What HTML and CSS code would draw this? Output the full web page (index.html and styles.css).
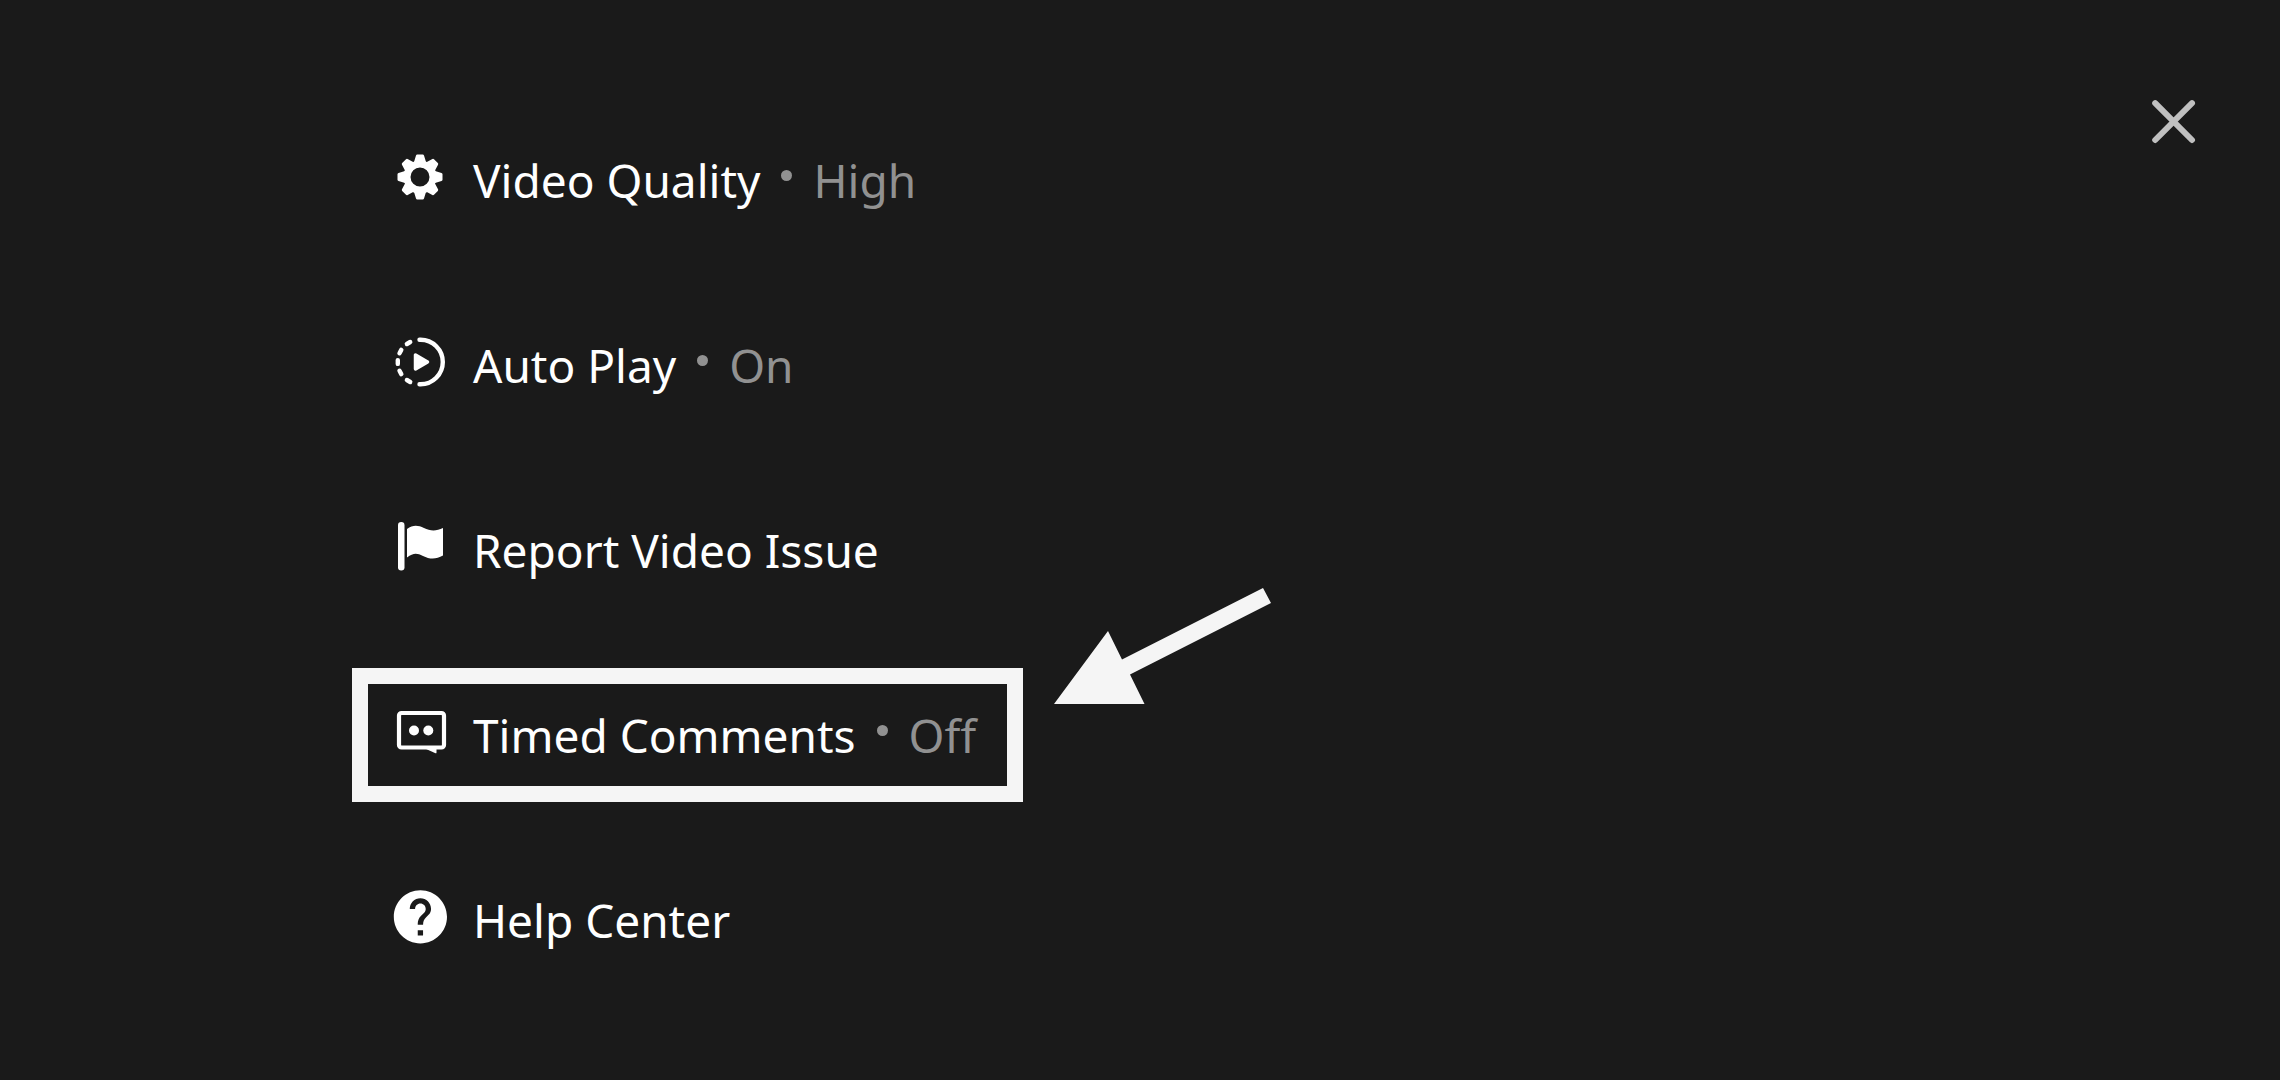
FILE: index.html
```html
<!DOCTYPE html>
<html lang="en">
<head>
    <meta charset="UTF-8">
    <meta name="viewport" content="width=device-width, initial-scale=1.0">
    <title>Player Settings</title>
    <link rel="stylesheet" href="styles.css">
</head>
<body>
    <main class="settings">
        <ul class="menu">
            <li class="menu-item">
                <button class="menu-button" type="button">
                    <svg class="icon" viewBox="0 0 54 54" aria-hidden="true">
                        <circle cx="27" cy="27" r="13" fill="none" stroke="currentColor" stroke-width="7"/>
                        <g fill="currentColor">
                            <path id="tooth" d="M21 12 23 5.500Q23.300 4.500 24.300 4.500H29.700Q30.700 4.500 31 5.500L33 12Z"/>
                            <use href="#tooth" transform="rotate(45 27 27)"/>
                            <use href="#tooth" transform="rotate(90 27 27)"/>
                            <use href="#tooth" transform="rotate(135 27 27)"/>
                            <use href="#tooth" transform="rotate(180 27 27)"/>
                            <use href="#tooth" transform="rotate(225 27 27)"/>
                            <use href="#tooth" transform="rotate(270 27 27)"/>
                            <use href="#tooth" transform="rotate(315 27 27)"/>
                        </g>
                    </svg>
                    <span class="label">Video Quality</span>
                    <span class="dot"></span>
                    <span class="value">High</span>
                </button>
            </li>
            <li class="menu-item">
                <button class="menu-button" type="button">
                    <svg class="icon" viewBox="0 0 54 54" aria-hidden="true">
                        <g fill="none" stroke="currentColor" stroke-width="4.400" stroke-linecap="round">
                            <path d="M26.500 4.700H27.500A22.300 22.300 0 0 1 27.500 49.300H26.500"/>
                            <path d="M17.200 7 13.900 9M8.300 14.900 6.500 18.300M4.800 25.100V28.900M6.500 35.700 8.300 39.100M13.900 45 17.200 47"/>
                        </g>
                        <path d="M22.500 20V34L34.500 27Z" fill="currentColor" stroke="currentColor" stroke-width="3.500" stroke-linejoin="round"/>
                    </svg>
                    <span class="label">Auto Play</span>
                    <span class="dot"></span>
                    <span class="value">On</span>
                </button>
            </li>
            <li class="menu-item">
                <button class="menu-button" type="button">
                    <svg class="icon" viewBox="0 0 54 54" aria-hidden="true" fill="currentColor">
                        <rect x="5" y="2" width="6.500" height="48.500" rx="3.200"/>
                        <path d="M14 9C20 4.500 25 5 31 8S43 11.500 50 8V35.500C43 39.500 37 39.500 30 36S20 33.500 14 37.500Z"/>
                    </svg>
                    <span class="label">Report Video Issue</span>
                </button>
            </li>
            <li class="menu-item highlighted">
                <button class="menu-button" type="button">
                    <svg class="icon" viewBox="0 0 54 54" aria-hidden="true" fill="currentColor">
                        <rect x="6" y="8" width="45" height="34.500" rx="2.500" fill="none" stroke="currentColor" stroke-width="4.200"/>
                        <circle cx="21" cy="25.500" r="5"/>
                        <circle cx="35.300" cy="25.500" r="5"/>
                        <path d="M32 43.500 42.500 48.300Q43.500 48.600 43.500 47.500V43.500Z"/>
                    </svg>
                    <span class="label">Timed Comments</span>
                    <span class="dot"></span>
                    <span class="value">Off</span>
                </button>
                <svg class="arrow" viewBox="0 0 217 116" aria-hidden="true">
                    <path d="M0 116 54 43 68 71.500 209 0 217 15 76 86.500 90.500 116Z" fill="currentColor"/>
                </svg>
            </li>
            <li class="menu-item">
                <a class="menu-button" href="#help">
                    <svg class="icon" viewBox="1.700 1.900 20.300 20.300" aria-hidden="true">
                        <path fill="currentColor" d="M12 2C6.480 2 2 6.480 2 12s4.480 10 10 10 10-4.480 10-10S17.520 2 12 2zm1 17h-2v-2h2v2zm2.070-7.750l-.9.920C13.450 12.900 13 13.500 13 15h-2v-.5c0-1.100.45-2.100 1.170-2.830l1.240-1.260c.37-.36.59-.86.59-1.410 0-1.100-.9-2-2-2s-2 .9-2 2H8c0-2.210 1.790-4 4-4s4 1.790 4 4c0 .88-.36 1.680-.93 2.250z"/>
                    </svg>
                    <span class="label">Help Center</span>
                </a>
            </li>
        </ul>

        <button class="close-button" type="button" aria-label="Close">
            <svg class="close-icon" viewBox="0 0 44 44" aria-hidden="true">
                <path d="M3.200 3.200 40 40M40 3.200 3.200 40" fill="none" stroke="currentColor" stroke-width="6" stroke-linecap="round"/>
            </svg>
        </button>
    </main>
</body>
</html>
```
FILE: styles.css
```css
* {
    box-sizing: border-box;
}

body {
    margin: 0;
    min-height: 100vh;
    background: #1a1a1a;
    font-family: "Noto Sans", sans-serif;
    color: white;
}

.settings {
    display: flex;
    justify-content: space-between;
    align-items: flex-start;
    padding: 100px 84px 0 352px;
}

.menu {
    display: flex;
    flex-direction: column;
    align-items: flex-start;
    gap: 51px;
    margin: 0;
    padding: 13px 0 0;
    list-style: none;
}

.menu-item {
    position: relative;
    border: 16px solid transparent;
}

.menu-item.highlighted {
    border-color: #f5f5f5;
}

.menu-button {
    display: flex;
    align-items: center;
    padding: 19px 31px 19px 25px;
    background: none;
    border: none;
    color: inherit;
    font-family: inherit;
    font-size: 46px;
    line-height: 64px;
    text-decoration: none;
    white-space: nowrap;
    cursor: pointer;
}

.icon {
    width: 54px;
    height: 54px;
    margin: 0 26px 6px 0;
}

.dot {
    width: 11px;
    height: 11px;
    margin: 0 21px 9px 21px;
    border-radius: 50%;
    background: #919191;
}

.value {
    color: #919191;
}

/* points at the highlighted row from the right */
.arrow {
    position: absolute;
    left: calc(100% + 47px);
    top: -96px;
    width: 217px;
    height: 116px;
    color: #f5f5f5;
}

.close-button {
    padding: 0;
    background: none;
    border: none;
    color: #c0c0c0;
    cursor: pointer;
}

.close-icon {
    display: block;
    width: 44px;
    height: 44px;
}
```
